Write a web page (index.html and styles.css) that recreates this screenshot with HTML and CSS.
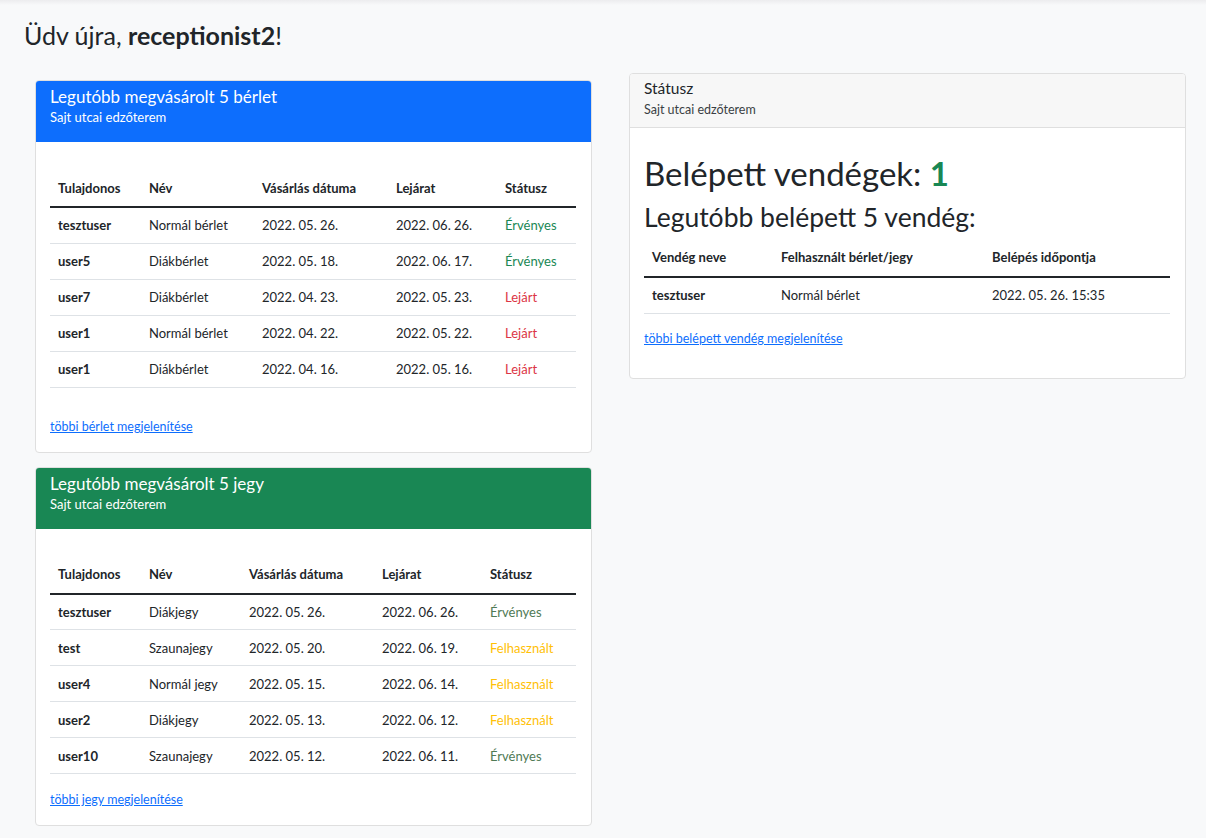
FILE: index.html
```html
<!DOCTYPE html>
<html lang="hu">
<head>
<meta charset="utf-8">
<title>Recepció</title>
<link rel="stylesheet" href="styles.css">
</head>
<body>
<div class="topshadow"></div>
<main class="page">
  <h1 class="welcome">Üdv újra, <strong>receptionist2</strong>!</h1>
  <div class="columns">
    <div class="col-left">
      <section class="card card-first">
        <header class="card-head head-blue">
          <div class="card-title">Legutóbb megvásárolt 5 bérlet</div>
          <div class="card-sub">Sajt utcai edzőterem</div>
        </header>
        <div class="card-body body-first">
          <table class="tbl tbl-passes">
            <thead>
              <tr><th>Tulajdonos</th><th>Név</th><th>Vásárlás dátuma</th><th>Lejárat</th><th>Státusz</th></tr>
            </thead>
            <tbody>
              <tr><td class="owner">tesztuser</td><td>Normál bérlet</td><td>2022. 05. 26.</td><td>2022. 06. 26.</td><td class="ok">Érvényes</td></tr>
              <tr><td class="owner">user5</td><td>Diákbérlet</td><td>2022. 05. 18.</td><td>2022. 06. 17.</td><td class="ok">Érvényes</td></tr>
              <tr><td class="owner">user7</td><td>Diákbérlet</td><td>2022. 04. 23.</td><td>2022. 05. 23.</td><td class="bad">Lejárt</td></tr>
              <tr><td class="owner">user1</td><td>Normál bérlet</td><td>2022. 04. 22.</td><td>2022. 05. 22.</td><td class="bad">Lejárt</td></tr>
              <tr><td class="owner">user1</td><td>Diákbérlet</td><td>2022. 04. 16.</td><td>2022. 05. 16.</td><td class="bad">Lejárt</td></tr>
            </tbody>
          </table>
          <a class="more more-first" href="#">többi bérlet megjelenítése</a>
        </div>
      </section>

      <section class="card">
        <header class="card-head head-green">
          <div class="card-title">Legutóbb megvásárolt 5 jegy</div>
          <div class="card-sub">Sajt utcai edzőterem</div>
        </header>
        <div class="card-body body-second">
          <table class="tbl tbl-tickets">
            <thead>
              <tr><th>Tulajdonos</th><th>Név</th><th>Vásárlás dátuma</th><th>Lejárat</th><th>Státusz</th></tr>
            </thead>
            <tbody>
              <tr><td class="owner">tesztuser</td><td>Diákjegy</td><td>2022. 05. 26.</td><td>2022. 06. 26.</td><td class="ok2">Érvényes</td></tr>
              <tr><td class="owner">test</td><td>Szaunajegy</td><td>2022. 05. 20.</td><td>2022. 06. 19.</td><td class="used">Felhasznált</td></tr>
              <tr><td class="owner">user4</td><td>Normál jegy</td><td>2022. 05. 15.</td><td>2022. 06. 14.</td><td class="used">Felhasznált</td></tr>
              <tr><td class="owner">user2</td><td>Diákjegy</td><td>2022. 05. 13.</td><td>2022. 06. 12.</td><td class="used">Felhasznált</td></tr>
              <tr><td class="owner">user10</td><td>Szaunajegy</td><td>2022. 05. 12.</td><td>2022. 06. 11.</td><td class="ok2">Érvényes</td></tr>
            </tbody>
          </table>
          <a class="more more-second" href="#">többi jegy megjelenítése</a>
        </div>
      </section>
    </div>

    <div class="col-right">
      <section class="card card-status">
        <header class="card-head head-light">
          <div class="status-title">Státusz</div>
          <div class="card-sub sub-dark">Sajt utcai edzőterem</div>
        </header>
        <div class="card-body body-status">
          <h2 class="big">Belépett vendégek: <span class="count">1</span></h2>
          <h3 class="mid">Legutóbb belépett 5 vendég:</h3>
          <table class="tbl tbl-guests">
            <thead>
              <tr><th>Vendég neve</th><th>Felhasznált bérlet/jegy</th><th>Belépés időpontja</th></tr>
            </thead>
            <tbody>
              <tr><td class="owner">tesztuser</td><td>Normál bérlet</td><td>2022. 05. 26. 15:35</td></tr>
            </tbody>
          </table>
          <a class="more more-guests" href="#">többi belépett vendég megjelenítése</a>
        </div>
      </section>
    </div>
  </div>
</main>
</body>
</html>
```

FILE: styles.css
```css
* { box-sizing: border-box; }
html, body { margin: 0; padding: 0; }
body {
  background: #f8f9fa;
  font-family: "Lato", "Noto Sans", sans-serif;
  color: #212529;
  font-size: 13px;
  min-height: 838px;
}
.topshadow {
  height: 5px;
  background: linear-gradient(#ececee, #f8f9fa);
}
.page { padding: 0 20px 0 24px; }
.welcome {
  margin: 13px 0 21px 0;
  font-weight: 400;
  font-size: 25px;
  line-height: 34px;
}
.welcome strong { font-weight: 700; }
.columns { display: flex; gap: 37px; align-items: flex-start; }
.col-left { width: 557px; margin-left: 11px; display: flex; flex-direction: column; gap: 14px; padding-top: 7px; }
.col-right { width: 557px; }
.card {
  background: #fff;
  border: 1px solid #dfdfdf;
  border-radius: 4px;
  overflow: hidden;
}
.card-head { padding: 4px 14px 0 14px; }
.head-blue { background: #0d6efd; color: #fff; height: 61px; }
.head-green { background: #198754; color: #fff; height: 61px; }
.head-light { background: #f7f7f7; border-bottom: 1px solid #dfdfdf; height: 54px; color: #212529; padding-top: 3px; }
.card-title { font-size: 17px; line-height: 24px; }
.card-sub { font-size: 13px; line-height: 17px; }
.status-title { font-size: 15.5px; line-height: 22px; }
.sub-dark { color: #3a3f44; margin-top: 2px; font-size: 12.5px; }
.card-body { padding: 27px 15px 14px 14px; }
.body-first { padding-bottom: 16px; }
.body-second { padding-bottom: 16px; }
.tbl { width: 100%; border-collapse: collapse; }
.tbl th {
  text-align: left;
  font-weight: 700;
  font-size: 13px;
  padding: 0 8px;
  height: 38px;
  border-bottom: 2px solid #212529;
}
.tbl td {
  font-size: 13px;
  padding: 0 8px;
  height: 36px;
  border-bottom: 1px solid #dee2e6;
  color: #212529;
}
.tbl td.owner { font-weight: 700; }
.tbl td.ok { color: #198754; }
.tbl td.ok2 { color: #4f7a55; }
.tbl td.bad { color: #dc3545; }
.tbl td.used { color: #ffc107; }
.tbl-passes th:nth-child(1) { width: 91px; }
.tbl-passes th:nth-child(2) { width: 113px; }
.tbl-passes th:nth-child(3) { width: 134px; }
.tbl-passes th:nth-child(4) { width: 109px; }
.tbl-tickets th:nth-child(1) { width: 91px; }
.tbl-tickets th:nth-child(2) { width: 100px; }
.tbl-tickets th:nth-child(3) { width: 133px; }
.tbl-tickets th:nth-child(4) { width: 108px; }
.tbl-guests th:nth-child(1) { width: 129px; }
.tbl-guests th:nth-child(2) { width: 211px; }
.tbl-guests th { height: 40px; }
.more {
  display: inline-block;
  color: #0d6efd;
  text-decoration: underline;
  font-size: 12.5px;
  line-height: 18px;
  margin-top: 15px;
}
.more-first { margin-top: 30px; }
.more-second { margin-top: 17px; }
.more-guests { margin-top: 16px; }
.body-status { padding: 25px 15px 30px 14px; }
.big { margin: 0; font-weight: 400; font-size: 33px; line-height: 40px; }
.count { color: #198754; font-weight: 700; }
.mid { margin: 6px 0 2px 0; font-weight: 400; font-size: 26.5px; line-height: 36px; }
.tbl-guests td { color: #212529; }
```
